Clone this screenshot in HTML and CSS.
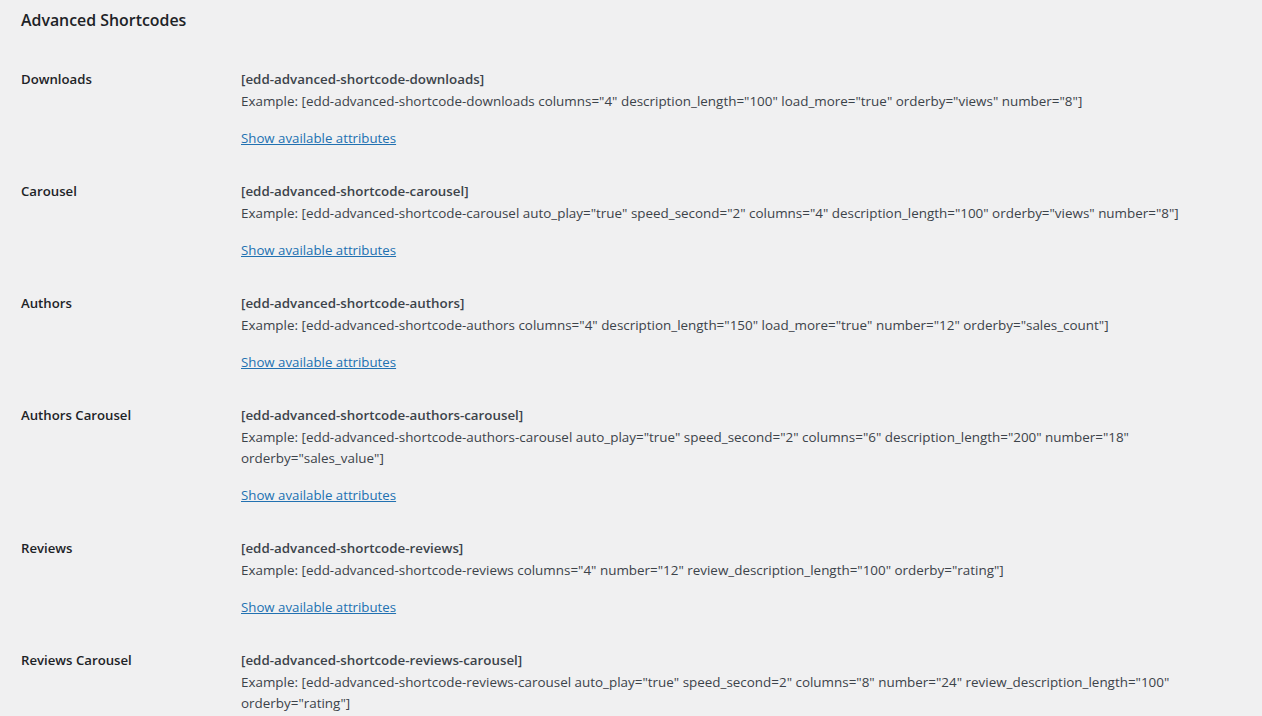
FILE: index.html
```html
<!DOCTYPE html>
<html>
<head>
<meta charset="utf-8">
<link rel="stylesheet" href="styles.css">
</head>
<body>
<div class="wrap">
  <h2 class="title">Advanced Shortcodes</h2>
  <div class="table">
    <div class="row">
      <div class="label">Downloads</div>
      <div class="cell">
        <div class="code">[edd-advanced-shortcode-downloads]</div>
        <div class="example">Example: [edd-advanced-shortcode-downloads columns="4" description_length="100" load_more="true" orderby="views" number="8"]</div>
        <a class="toggle" href="#">Show available attributes</a>
      </div>
    </div>
    <div class="row">
      <div class="label">Carousel</div>
      <div class="cell">
        <div class="code">[edd-advanced-shortcode-carousel]</div>
        <div class="example">Example: [edd-advanced-shortcode-carousel auto_play="true" speed_second="2" columns="4" description_length="100" orderby="views" number="8"]</div>
        <a class="toggle" href="#">Show available attributes</a>
      </div>
    </div>
    <div class="row">
      <div class="label">Authors</div>
      <div class="cell">
        <div class="code">[edd-advanced-shortcode-authors]</div>
        <div class="example">Example: [edd-advanced-shortcode-authors columns="4" description_length="150" load_more="true" number="12" orderby="sales_count"]</div>
        <a class="toggle" href="#">Show available attributes</a>
      </div>
    </div>
    <div class="row">
      <div class="label">Authors Carousel</div>
      <div class="cell">
        <div class="code">[edd-advanced-shortcode-authors-carousel]</div>
        <div class="example">Example: [edd-advanced-shortcode-authors-carousel auto_play="true" speed_second="2" columns="6" description_length="200" number="18" orderby="sales_value"]</div>
        <a class="toggle" href="#">Show available attributes</a>
      </div>
    </div>
    <div class="row">
      <div class="label">Reviews</div>
      <div class="cell">
        <div class="code">[edd-advanced-shortcode-reviews]</div>
        <div class="example">Example: [edd-advanced-shortcode-reviews columns="4" number="12" review_description_length="100" orderby="rating"]</div>
        <a class="toggle" href="#">Show available attributes</a>
      </div>
    </div>
    <div class="row">
      <div class="label">Reviews Carousel</div>
      <div class="cell">
        <div class="code">[edd-advanced-shortcode-reviews-carousel]</div>
        <div class="example">Example: [edd-advanced-shortcode-reviews-carousel auto_play="true" speed_second=2" columns="8" number="24" review_description_length="100" orderby="rating"]</div>
        <a class="toggle" href="#">Show available attributes</a>
      </div>
    </div>
  </div>
</div>
</body>
</html>
```
FILE: styles.css
```css
html, body {
  margin: 0;
  padding: 0;
  background: #f0f0f1;
}
body {
  font-family: "Open Sans", "Noto Sans", sans-serif;
  color: #3c434a;
  font-size: 13.43px;
}
.wrap {
  padding: 8px 30px 0 21px;
}
.title {
  margin: 0;
  font-size: 15.9px;
  font-weight: 600;
  line-height: 24px;
  color: #1d2327;
}
.table {
  margin-top: 36px;
  display: flex;
  flex-direction: column;
  gap: 31px;
}
.row {
  display: grid;
  grid-template-columns: 220px 1fr;
}
.label {
  font-weight: 600;
  font-size: 13.2px;
  color: #1d2327;
  line-height: 22px;
}
.cell {
  line-height: 22px;
  display: flex;
  flex-direction: column;
  align-items: flex-start;
}
.code {
  font-weight: 600;
  font-size: 13.35px;
}
.example {
  margin-top: 1px;
  line-height: 21px;
}
.toggle {
  margin-top: 15px;
  font-size: 13.25px;
  color: #2271b1;
  text-decoration: underline;
}
```
